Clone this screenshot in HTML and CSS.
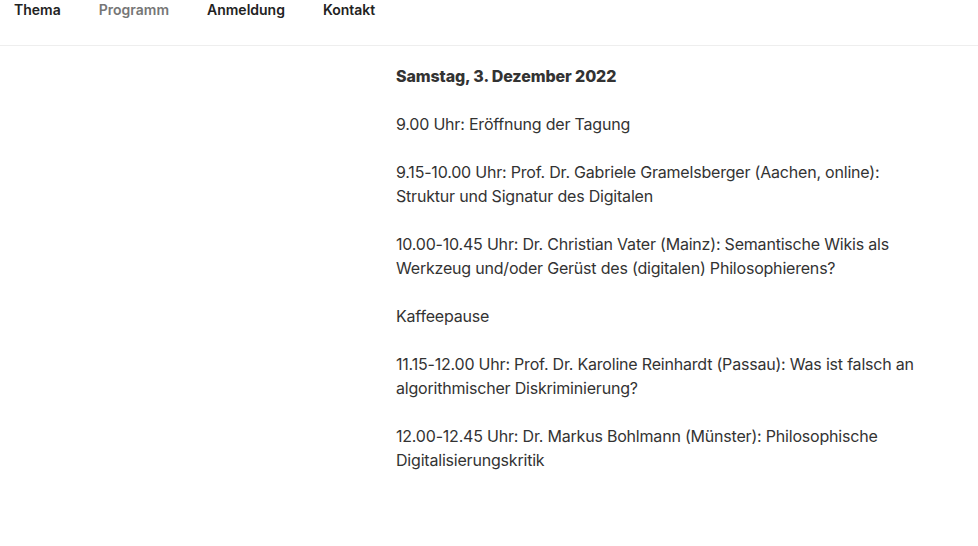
FILE: index.html
```html
<!DOCTYPE html>
<html lang="de">
<head>
<meta charset="utf-8">
<title>Programm</title>
<link rel="stylesheet" href="styles.css">
</head>
<body>
<header class="site-header">
  <nav class="main-nav">
    <a class="nav-item" href="#">Thema</a>
    <a class="nav-item current" href="#">Programm</a>
    <a class="nav-item" href="#">Anmeldung</a>
    <a class="nav-item" href="#">Kontakt</a>
  </nav>
</header>
<main class="site-content">
  <article class="entry-content">
    <p><strong>Samstag, 3. Dezember 2022</strong></p>
    <p>9.00 Uhr: Eröffnung der Tagung</p>
    <p>9.15-10.00 Uhr: Prof. Dr. Gabriele Gramelsberger (Aachen, online): Struktur und Signatur des Digitalen</p>
    <p>10.00-10.45 Uhr: Dr. Christian Vater (Mainz): Semantische Wikis als Werkzeug und/oder Gerüst des (digitalen) Philosophierens?</p>
    <p>Kaffeepause</p>
    <p>11.15-12.00 Uhr: Prof. Dr. Karoline Reinhardt (Passau): Was ist falsch an algorithmischer Diskriminierung?</p>
    <p>12.00-12.45 Uhr: Dr. Markus Bohlmann (Münster): Philosophische Digitalisierungskritik</p>
  </article>
</main>
</body>
</html>
```
FILE: styles.css
```css
html, body {
  margin: 0;
  padding: 0;
  background: #fff;
}
body {
  font-family: Inter, "Liberation Sans", sans-serif;
  color: #333;
  font-size: 16px;
  line-height: 24px;
}
.site-header {
  border-bottom: 1px solid #eee;
  padding: 0 0 25px 14px;
}
.main-nav {
  display: flex;
  gap: 38px;
}
.nav-item {
  font-size: 14px;
  font-weight: 600;
  line-height: 20px;
  color: #222;
  text-decoration: none;
}
.nav-item.current {
  color: #767676;
}
.site-content {
  padding-top: 18px;
}
.entry-content {
  margin-left: 396px;
  width: 534px;
  letter-spacing: -0.2px;
}
.entry-content p {
  margin: 0 0 24px;
}
.entry-content strong {
  font-weight: 800;
  letter-spacing: -0.1px;
}
```
